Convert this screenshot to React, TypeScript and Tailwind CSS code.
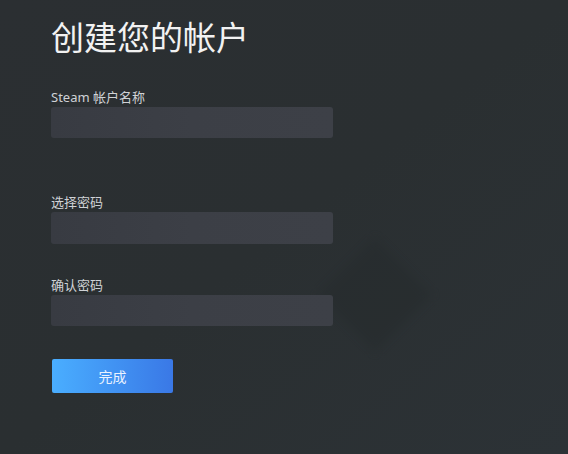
import React from "react";

const font = { fontFamily: '"Noto Sans", "Noto Sans CJK SC", sans-serif' };

export default function App() {
  return (
    <div
      className="relative h-[454px] w-[568px] overflow-hidden bg-gradient-to-br from-[#2b2f32] via-[#2a2f31] to-[#2c3236] pl-[51px] pt-[21px]"
      style={font}
    >
      <div className="pointer-events-none absolute left-[335px] top-[255px] h-[80px] w-[80px] rotate-45 bg-[#262b2d] opacity-50 blur-[4px]" />
      <div className="relative">
        <h1 className="text-[33px] leading-[33px] font-normal text-[#f2f2f2]">创建您的帐户</h1>
        <div className="mt-[35px]">
          <div className="text-[13px] leading-[16px] text-[#cfd2d6]">Steam 帐户名称</div>
          <div className="mt-[2px] h-[31px] w-[282px] rounded-[3px] bg-gradient-to-r from-[#383b42] via-[#3c3f46] to-[#3d4047]" />
        </div>
        <div className="mt-[56px]">
          <div className="text-[13px] leading-[16px] text-[#cfd2d6]">选择密码</div>
          <div className="mt-[2px] h-[32px] w-[282px] rounded-[3px] bg-gradient-to-r from-[#383b42] via-[#3c3f46] to-[#3d4047]" />
        </div>
        <div className="mt-[33px]">
          <div className="text-[13px] leading-[16px] text-[#cfd2d6]">确认密码</div>
          <div className="mt-[2px] h-[31px] w-[282px] rounded-[3px] bg-gradient-to-r from-[#383b42] via-[#3c3f46] to-[#3d4047]" />
        </div>
        <button className="ml-px mt-[33px] flex h-[34px] w-[121px] items-center justify-center rounded-[2px] bg-gradient-to-r from-[#4aaeff] to-[#3a78e6] text-[14px] text-[#eaf2ff]">
          完成
        </button>
      </div>
    </div>
  );
}
